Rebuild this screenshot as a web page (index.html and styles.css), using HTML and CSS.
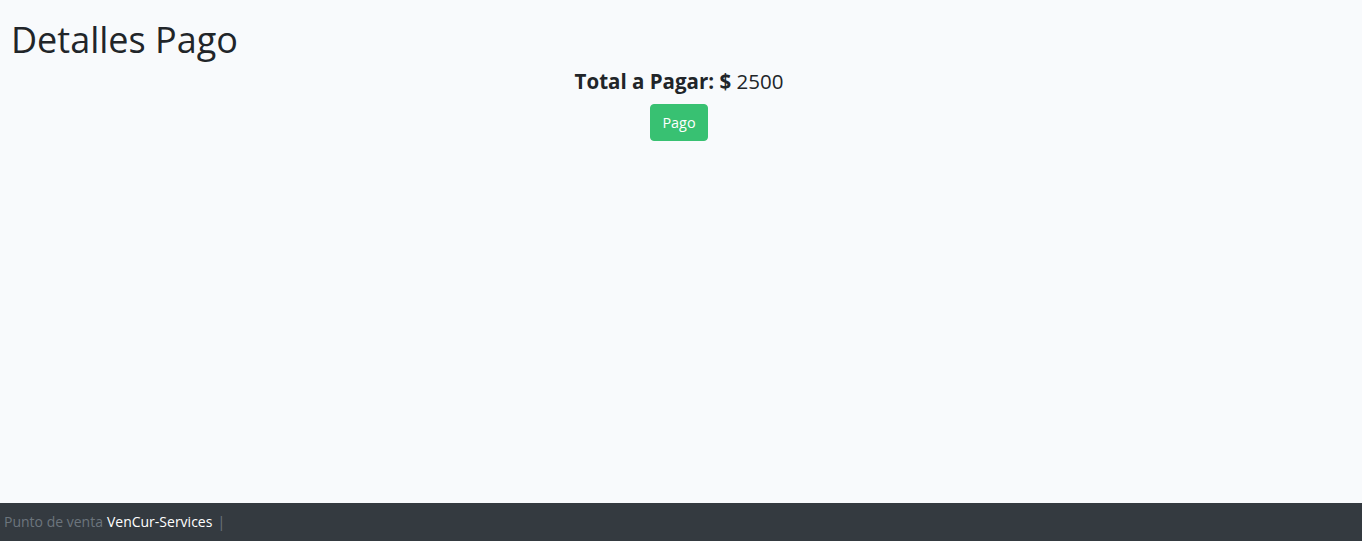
FILE: index.html
```html
<!DOCTYPE html>
<html lang="es">
<head>
<meta charset="utf-8">
<title>Detalles Pago</title>
<link rel="stylesheet" href="styles.css">
</head>
<body>
<main class="content">
  <h1 class="title">Detalles Pago</h1>
  <div class="summary">
    <h4 class="total"><strong>Total a Pagar: $</strong> 2500</h4>
    <button class="btn btn-success" type="button">Pago</button>
  </div>
</main>
<footer class="footer">
  <span class="muted">Punto de venta</span>
  <span class="brand">VenCur-Services</span>
  <span class="muted sep">|</span>
</footer>
</body>
</html>
```
FILE: styles.css
```css
html, body {
  margin: 0;
  padding: 0;
  height: 100%;
}
body {
  background: #f8fafc;
  color: #212529;
  font-family: "Open Sans", "Noto Sans", sans-serif;
  font-size: 14.4px;
  line-height: 1.6;
  display: flex;
  flex-direction: column;
  min-height: 100vh;
}
.content {
  flex: 1;
  padding: 18px 15px 0 11px;
}
.title {
  margin: 0 0 8px;
  font-size: 36px;
  font-weight: 400;
  line-height: 1.2;
}
.summary {
  display: flex;
  flex-direction: column;
  align-items: center;
  gap: 10px;
}
.total {
  margin: 0;
  font-size: 20.5px;
  font-weight: 400;
  line-height: 1.2;
}
.total strong {
  font-weight: 700;
}
.btn {
  font-family: inherit;
  font-size: 14.4px;
  line-height: 1.6;
  padding: 6px 11px;
  border: 1px solid transparent;
  border-radius: 4px;
  cursor: pointer;
}
.btn-success {
  background: #38c172;
  border-color: #38c172;
  color: #fff;
}
.footer {
  background: #343a40;
  height: 38px;
  display: flex;
  align-items: center;
  gap: 4px;
  padding: 0 4px;
  font-size: 14px;
}
.muted {
  color: #6c757d;
}
.brand {
  color: #fff;
}
.sep {
  margin-left: 1px;
}
```
